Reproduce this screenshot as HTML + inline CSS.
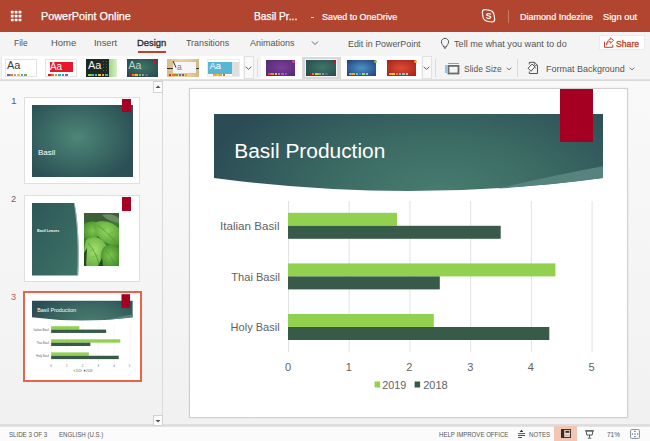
<!DOCTYPE html>
<html><head><meta charset="utf-8">
<style>
*{margin:0;padding:0;box-sizing:border-box}
html,body{width:650px;height:441px;overflow:hidden}
body{position:relative;background:#f3f3f3;font-family:"Liberation Sans",sans-serif;color:#444}
.a{position:absolute;white-space:nowrap;line-height:1}
#top{position:absolute;left:0;top:0;width:650px;height:32px;background:#b24530}
.w{color:#fff}
.dot{position:absolute;width:2.8px;height:2.8px;background:#fff;border-radius:0.3px}
#tabs{position:absolute;left:0;top:32px;width:650px;height:49px;background:#f4f4f4}
.tab{font-size:10.5px;color:#555}
.gbox{position:absolute;top:56px;height:24px;background:#fff;border:1px solid #e6e6e6}
.th{position:absolute;top:59px;width:31px;height:18px}
.dd{position:absolute;top:56px;height:24px;width:10px;background:#fafafa;border:1px solid #e0e0e0}
.sep{position:absolute;width:1px;background:#dcdcdc}
#hline{position:absolute;left:0;top:79px;width:650px;height:2px;background:linear-gradient(#e6e6e6,#d6d6d6)}
#panel{position:absolute;left:0;top:81px;width:163px;height:344px;background:linear-gradient(#f9f9f9,#f1f1f1)}
#pborder{position:absolute;left:162px;top:81px;width:1px;height:344px;background:#dadada}
#canvas{position:absolute;left:163px;top:81px;width:487px;height:344px;background:linear-gradient(#f9f9f9,#f1f1f1)}
#status{position:absolute;left:0;top:424px;width:650px;height:17px;background:linear-gradient(#e4e4e4,#d9d9d9 1px,#e4e4e4 2.5px,#fbfbfb 3px,#fbfbfb)}
.st{font-size:7.5px;color:#555}
.thumb{position:absolute;left:24px;width:116px;height:87px;background:#fff;border:1px solid #dfdfdf}
.num{font-size:10px;color:#666}
.slide{position:absolute;background:#fff}
.tag{position:absolute;background:#a90025}
.banner{position:absolute}
.lbl{font-size:11px;color:#595959}
</style></head>
<body>
<!-- title bar -->
<div id="top">
  <svg class="a" style="left:0;top:0" width="32" height="32" viewBox="0 0 32 32"><g fill="#fff"><rect x="10.85" y="10.85" width="2.7" height="2.7" rx="0.5"/><rect x="14.75" y="10.85" width="2.7" height="2.7" rx="0.5"/><rect x="18.65" y="10.85" width="2.7" height="2.7" rx="0.5"/><rect x="10.85" y="14.75" width="2.7" height="2.7" rx="0.5"/><rect x="14.75" y="14.75" width="2.7" height="2.7" rx="0.5"/><rect x="18.65" y="14.75" width="2.7" height="2.7" rx="0.5"/><rect x="10.85" y="18.65" width="2.7" height="2.7" rx="0.5"/><rect x="14.75" y="18.65" width="2.7" height="2.7" rx="0.5"/><rect x="18.65" y="18.65" width="2.7" height="2.7" rx="0.5"/></g></svg>
  <div class="a" style="left:41.36px;top:11px;font-size:11.5px;color:#fff;font-weight:400;-webkit-text-stroke:0.25px #fff;transform:scaleX(0.944);transform-origin:0 0">PowerPoint Online</div>
  <div class="a" style="left:254.27px;top:11px;font-size:11px;color:#fff;font-weight:400;-webkit-text-stroke:0.25px #fff;transform:scaleX(0.931);transform-origin:0 0">Basil Pr...</div>
  <div style="position:absolute;left:311px;top:17px;width:3px;height:1px;background:#f0d0c8"></div>
  <div class="a" style="left:322.17px;top:12px;font-size:9.6px;color:#fff;font-weight:400;-webkit-text-stroke:0.2px #fff;transform:scaleX(0.927);transform-origin:0 0">Saved to OneDrive</div>
  <svg class="a" style="left:481px;top:8px" width="16" height="16" viewBox="0 0 16 16"><path d="M4 1.6 C5 1.6 5.8 2.1 7.5 2.1 C10.8 2.1 13.2 4.6 13.2 7.8 C13.2 9.5 13.7 10.2 13.7 11.3 C13.7 12.8 12.5 14 11 14 C9.9 14 9.3 13.5 7.5 13.5 C4.3 13.5 1.8 11 1.8 7.8 C1.8 6.2 1.3 5.4 1.3 4.3 C1.3 2.8 2.5 1.6 4 1.6 Z" fill="none" stroke="#fff" stroke-width="1.1"/><text x="7.6" y="10.9" font-size="8.5" font-weight="bold" fill="#fff" text-anchor="middle" font-family="Liberation Sans">S</text></svg>
  <div class="sep" style="left:508px;top:10px;height:13px;background:#c87a68"></div>
  <div class="a" style="left:520.46px;top:12px;font-size:9.6px;color:#fff;font-weight:400;-webkit-text-stroke:0.2px #fff;transform:scaleX(0.942);transform-origin:0 0">Diamond Indezine</div>
  <div class="a" style="left:603.03px;top:12px;font-size:9.6px;color:#fff;font-weight:400;-webkit-text-stroke:0.2px #fff;transform:scaleX(0.971);transform-origin:0 0">Sign out</div>
</div>
<!-- ribbon -->
<div id="tabs"></div>
<div class="a" style="left:13.61px;top:38px;font-size:9.5px;color:#555;font-weight:400;transform:scaleX(0.893);transform-origin:0 0">File</div>
<div class="a" style="left:51.00px;top:38px;font-size:9.5px;color:#555;font-weight:400;transform:scaleX(0.996);transform-origin:0 0">Home</div>
<div class="a" style="left:94.43px;top:38px;font-size:9.5px;color:#555;font-weight:400;transform:scaleX(0.974);transform-origin:0 0">Insert</div>
<div class="a" style="left:137.21px;top:38px;font-size:9.5px;color:#2a2a2a;font-weight:400;-webkit-text-stroke:0.3px #2a2a2a;transform:scaleX(0.993);transform-origin:0 0">Design</div>
<div style="position:absolute;left:138px;top:51px;width:28px;height:2px;background:#b5472f"></div>
<div class="a" style="left:186.00px;top:38px;font-size:9.5px;color:#555;font-weight:400;transform:scaleX(0.935);transform-origin:0 0">Transitions</div>
<div class="a" style="left:250.00px;top:38px;font-size:9.5px;color:#555;font-weight:400;transform:scaleX(0.947);transform-origin:0 0">Animations</div>
<svg class="a" style="left:311px;top:40px" width="8" height="6" viewBox="0 0 8 6"><path d="M1 1.5 L4 4.5 L7 1.5" fill="none" stroke="#666" stroke-width="1"/></svg>
<div class="a" style="left:347.96px;top:39px;font-size:9.5px;color:#555;font-weight:400;transform:scaleX(0.935);transform-origin:0 0">Edit in PowerPoint</div>
<svg class="a" style="left:440px;top:37px" width="10" height="13" viewBox="0 0 10 13"><path d="M3.7 10 C3.5 8.3 1.4 7.3 1.4 4.9 C1.4 2.8 3 1.4 5 1.4 C7 1.4 8.6 2.8 8.6 4.9 C8.6 7.3 6.5 8.3 6.3 10 Z" fill="none" stroke="#555" stroke-width="1"/><path d="M3.8 10.4 H6.2 L5.6 11.8 H4.4 Z" fill="#555"/></svg>
<div class="a" style="left:453.50px;top:39px;font-size:9.5px;color:#555;font-weight:400;transform:scaleX(0.962);transform-origin:0 0">Tell me what you want to do</div>
<div style="position:absolute;left:599px;top:35px;width:45.5px;height:14.5px;background:#fff;border:1px solid #ececec"></div>
<svg class="a" style="left:603px;top:37px" width="12" height="11" viewBox="0 0 12 11"><path d="M1.5 4.8 V10.3 H9.8 V7.6" fill="none" stroke="#c0432a" stroke-width="1"/><path d="M3.6 8.2 C3.6 5.6 5.2 4.5 7.3 4.5 V6.2 L10.6 3.3 L7.3 0.9 V2.5 C5 2.6 3.6 4.8 3.6 8.2 Z" fill="none" stroke="#c0432a" stroke-width="0.9" stroke-linejoin="round"/></svg>
<div class="a" style="left:616.09px;top:39px;font-size:9.5px;color:#c0432a;font-weight:400;-webkit-text-stroke:0.35px #c0432a;transform:scaleX(0.912);transform-origin:0 0">Share</div>

<div style="position:absolute;left:1px;top:56px;width:242px;height:23px;background:#fff;border-left:1px solid #e8e8e8"></div><div style="position:absolute;left:5px;top:59px;width:32px;height:18px;background:#fff;border:1px solid #e3e3e3"></div><div class="a" style="left:6.5px;top:59.5px;font-size:11.5px;color:#3a3a3a;transform:scaleX(0.95);transform-origin:0 0">Aa</div><div style="position:absolute;left:7.0px;top:73.7px;width:2.6px;height:2px;background:#4472c4"></div><div style="position:absolute;left:10.4px;top:73.7px;width:2.6px;height:2px;background:#ed7d31"></div><div style="position:absolute;left:13.8px;top:73.7px;width:2.6px;height:2px;background:#a5a5a5"></div><div style="position:absolute;left:17.2px;top:73.7px;width:2.6px;height:2px;background:#ffc000"></div><div style="position:absolute;left:20.6px;top:73.7px;width:2.6px;height:2px;background:#5b9bd5"></div><div style="position:absolute;left:24.0px;top:73.7px;width:2.6px;height:2px;background:#70ad47"></div><div style="position:absolute;left:45px;top:59px;width:32px;height:18px;background:#fff;border:1px solid #e3e3e3"></div><div style="position:absolute;left:49.6px;top:62px;width:23px;height:10px;background:#e9172b"></div><div class="a" style="left:49.5px;top:60.5px;font-size:11px;color:#fff;transform:scaleX(0.9);transform-origin:0 0">Aa</div><div style="position:absolute;left:48.0px;top:73.7px;width:2.6px;height:2px;background:#e81123"></div><div style="position:absolute;left:51.4px;top:73.7px;width:2.6px;height:2px;background:#f7630c"></div><div style="position:absolute;left:54.8px;top:73.7px;width:2.6px;height:2px;background:#8cbd3f"></div><div style="position:absolute;left:58.2px;top:73.7px;width:2.6px;height:2px;background:#2bb39a"></div><div style="position:absolute;left:61.6px;top:73.7px;width:2.6px;height:2px;background:#3b8fd0"></div><div style="position:absolute;left:65.0px;top:73.7px;width:2.6px;height:2px;background:#a349c8"></div><div style="position:absolute;left:86px;top:59px;width:31px;height:18px;background:linear-gradient(90deg,#1f2923 0 74%,#9fd483 74%,#d9f0c8)"></div><div style="position:absolute;left:102px;top:60px;width:6px;height:12px;background:radial-gradient(circle,#4a584c 0.5px,transparent 0.6px) 0 0/3px 3px"></div><div class="a" style="left:87.5px;top:59.5px;font-size:11.5px;color:#f4f4f4;transform:scaleX(0.95);transform-origin:0 0">Aa</div><div style="position:absolute;left:88.0px;top:73.8px;width:2.6px;height:2px;background:#8fd14f"></div><div style="position:absolute;left:91.4px;top:73.8px;width:2.6px;height:2px;background:#4fb3d9"></div><div style="position:absolute;left:94.8px;top:73.8px;width:2.6px;height:2px;background:#4fb3d9"></div><div style="position:absolute;left:98.2px;top:73.8px;width:2.6px;height:2px;background:#f2c12e"></div><div style="position:absolute;left:101.6px;top:73.8px;width:2.6px;height:2px;background:#f2a52e"></div><div style="position:absolute;left:105.0px;top:73.8px;width:2.6px;height:2px;background:#5ba3c9"></div><div style="position:absolute;left:127px;top:59.4px;width:31px;height:17.2px;background:radial-gradient(ellipse at 50% 45%,#3f7568,#24484a)"></div><div style="position:absolute;left:153.5px;top:60px;width:2.5px;height:2.5px;background:#c8102e"></div><div class="a" style="left:128.5px;top:60.3px;font-size:10.5px;color:#bfd6d0;transform:scaleX(1);transform-origin:0 0">Aa</div><div style="position:absolute;left:129.0px;top:73.8px;width:2.5px;height:2px;background:#c8102e"></div><div style="position:absolute;left:132.2px;top:73.8px;width:2.5px;height:2px;background:#e87b22"></div><div style="position:absolute;left:135.4px;top:73.8px;width:2.5px;height:2px;background:#f0c419"></div><div style="position:absolute;left:138.6px;top:73.8px;width:2.5px;height:2px;background:#95b26d"></div><div style="position:absolute;left:141.8px;top:73.8px;width:2.5px;height:2px;background:#8e9aa0"></div><div style="position:absolute;left:145.0px;top:73.8px;width:2.5px;height:2px;background:#8a4db0"></div><div style="position:absolute;left:167px;top:59.4px;width:31.6px;height:17.2px;background:linear-gradient(90deg,#d8bb86,#ead3a6 40%,#e6cc9c 70%,#d5b783)"></div><div style="position:absolute;left:167px;top:67.5px;width:31.6px;height:1.6px;background:#2f2a26"></div><div style="position:absolute;left:172.5px;top:62px;width:23.5px;height:10.5px;background:#f6f6f6;box-shadow:0 0 1px #aaa"></div><div class="a" style="left:177px;top:63.2px;font-size:8.5px;color:#777;">a</div><div style="position:absolute;left:173.5px;top:61.2px;width:0.9px;height:6.5px;background:#333;transform:rotate(-25deg)"></div><div style="position:absolute;left:169.0px;top:73.8px;width:2.4px;height:2px;background:#b23b2e"></div><div style="position:absolute;left:172.2px;top:73.8px;width:2.4px;height:2px;background:#e07a1f"></div><div style="position:absolute;left:175.4px;top:73.8px;width:2.4px;height:2px;background:#7aa33b"></div><div style="position:absolute;left:178.6px;top:73.8px;width:2.4px;height:2px;background:#2e86b5"></div><div style="position:absolute;left:181.8px;top:73.8px;width:2.4px;height:2px;background:#c43b3b"></div><div style="position:absolute;left:185.0px;top:73.8px;width:2.4px;height:2px;background:#e0a030"></div><div style="position:absolute;left:207px;top:59.4px;width:32.5px;height:17.2px;background:#fff;border:1px solid #ececec"></div><div style="position:absolute;left:208px;top:61.5px;width:23.6px;height:12.3px;background:#57b6d3"></div><div style="position:absolute;left:231.6px;top:61.5px;width:7px;height:14px;background:#dedede"></div><div class="a" style="left:209.5px;top:61.2px;font-size:9.5px;color:#fff;transform:scaleX(1);transform-origin:0 0">Aa</div><div style="position:absolute;left:213.0px;top:73.8px;width:2.6px;height:2px;background:#f5a623"></div><div style="position:absolute;left:216.2px;top:73.8px;width:2.6px;height:2px;background:#f0c419"></div><div style="position:absolute;left:219.4px;top:73.8px;width:2.6px;height:2px;background:#f0a030"></div><div style="position:absolute;left:222.6px;top:73.8px;width:2.6px;height:2px;background:#e8583e"></div><div style="position:absolute;left:244px;top:56px;width:10px;height:23px;background:#f9f9f9;border:1px solid #e2e2e2"></div><svg class="a" style="left:245px;top:66px" width="7" height="5" viewBox="0 0 7 5"><path d="M0.6 0.8 L3.5 3.3 L6.4 0.8" fill="none" stroke="#555" stroke-width="0.9"/></svg><div style="position:absolute;left:257px;top:59px;width:1px;height:18px;background:#dcdcdc"></div><div style="position:absolute;left:261px;top:56px;width:160px;height:23px;background:#fff"></div><div style="position:absolute;left:266px;top:59.8px;width:28.6px;height:16.2px;background:radial-gradient(ellipse at 55% 45%,#7d3d99,#4d2870)"></div><div style="position:absolute;left:292px;top:59.5px;width:3px;height:3px;background:#e5457a;border-radius:50%"></div><div style="position:absolute;left:268.0px;top:73.3px;width:2.6px;height:2.2px;background:#e8473c"></div><div style="position:absolute;left:271.3px;top:73.3px;width:2.6px;height:2.2px;background:#f08c2e"></div><div style="position:absolute;left:274.6px;top:73.3px;width:2.6px;height:2.2px;background:#f6c330"></div><div style="position:absolute;left:277.9px;top:73.3px;width:2.6px;height:2.2px;background:#e06cc0"></div><div style="position:absolute;left:281.2px;top:73.3px;width:2.6px;height:2.2px;background:#b05ad0"></div><div style="position:absolute;left:284.5px;top:73.3px;width:2.6px;height:2.2px;background:#9a4ccf"></div><div style="position:absolute;left:301.7px;top:57px;width:39px;height:22px;background:#d8d8d8"></div><div style="position:absolute;left:305px;top:59px;width:32px;height:18px;background:#f4f4f4"></div><div style="position:absolute;left:306px;top:60px;width:30px;height:16px;background:radial-gradient(ellipse at 55% 45%,#3f7668,#24474a)"></div><div style="position:absolute;left:333px;top:59.5px;width:3px;height:3px;background:#c8102e;border-radius:50%"></div><div style="position:absolute;left:308.5px;top:73.3px;width:2.6px;height:2.2px;background:#c8102e"></div><div style="position:absolute;left:311.8px;top:73.3px;width:2.6px;height:2.2px;background:#e87b22"></div><div style="position:absolute;left:315.1px;top:73.3px;width:2.6px;height:2.2px;background:#f0c419"></div><div style="position:absolute;left:318.4px;top:73.3px;width:2.6px;height:2.2px;background:#95b26d"></div><div style="position:absolute;left:321.7px;top:73.3px;width:2.6px;height:2.2px;background:#8e9aa0"></div><div style="position:absolute;left:325.0px;top:73.3px;width:2.6px;height:2.2px;background:#8a4db0"></div><div style="position:absolute;left:347px;top:60px;width:29px;height:16px;background:radial-gradient(ellipse at 50% 50%,#4b93c6,#1f3f7c)"></div><div style="position:absolute;left:373.5px;top:59.5px;width:3px;height:3px;background:#8cc63f;border-radius:50%"></div><div style="position:absolute;left:349.0px;top:73.3px;width:2.6px;height:2.2px;background:#8cc63f"></div><div style="position:absolute;left:352.3px;top:73.3px;width:2.6px;height:2.2px;background:#f3a533"></div><div style="position:absolute;left:355.6px;top:73.3px;width:2.6px;height:2.2px;background:#5ec2e8"></div><div style="position:absolute;left:358.9px;top:73.3px;width:2.6px;height:2.2px;background:#2ba39b"></div><div style="position:absolute;left:362.2px;top:73.3px;width:2.6px;height:2.2px;background:#b0d36b"></div><div style="position:absolute;left:365.5px;top:73.3px;width:2.6px;height:2.2px;background:#7fd3e6"></div><div style="position:absolute;left:387px;top:60px;width:29px;height:16px;background:radial-gradient(ellipse at 50% 50%,#dc4d35,#a51f18)"></div><div style="position:absolute;left:413.5px;top:59.5px;width:3px;height:3px;background:#f5a623;border-radius:50%"></div><div style="position:absolute;left:389.0px;top:73.3px;width:2.6px;height:2.2px;background:#f5a623"></div><div style="position:absolute;left:392.3px;top:73.3px;width:2.6px;height:2.2px;background:#f6d23a"></div><div style="position:absolute;left:395.6px;top:73.3px;width:2.6px;height:2.2px;background:#e8785a"></div><div style="position:absolute;left:398.9px;top:73.3px;width:2.6px;height:2.2px;background:#63c2e6"></div><div style="position:absolute;left:402.2px;top:73.3px;width:2.6px;height:2.2px;background:#8bd18a"></div><div style="position:absolute;left:405.5px;top:73.3px;width:2.6px;height:2.2px;background:#c9c9c9"></div><div style="position:absolute;left:422px;top:56px;width:10px;height:23px;background:#f9f9f9;border:1px solid #e2e2e2"></div><svg class="a" style="left:423px;top:66px" width="7" height="5" viewBox="0 0 7 5"><path d="M0.6 0.8 L3.5 3.3 L6.4 0.8" fill="none" stroke="#555" stroke-width="0.9"/></svg><div style="position:absolute;left:435px;top:59px;width:1px;height:18px;background:#dcdcdc"></div><svg class="a" style="left:445px;top:62px" width="15" height="13" viewBox="0 0 15 13"><path d="M3 1.5 H14" stroke="#59b4e6" stroke-width="1"/><path d="M1 3 V11" stroke="#3a8fd8" stroke-width="1"/><rect x="3.5" y="3.9" width="10" height="7.6" fill="none" stroke="#6b6b6b" stroke-width="1.8"/></svg><div class="a" style="left:464.01px;top:64px;font-size:9.5px;color:#555;font-weight:400;transform:scaleX(0.893);transform-origin:0 0">Slide Size</div><svg class="a" style="left:506px;top:66.5px" width="6" height="5" viewBox="0 0 6 5"><path d="M0.6 0.8 L3.0 2.8 L5.4 0.8" fill="none" stroke="#666" stroke-width="0.9"/></svg><div style="position:absolute;left:517px;top:59px;width:1px;height:18px;background:#dcdcdc"></div><svg class="a" style="left:527px;top:61px" width="13" height="14" viewBox="0 0 13 14"><path d="M2.3 3.4 V1.3 H7.6 L10.5 4.4 V12.5 H2.3 V10.6" fill="none" stroke="#505050" stroke-width="1"/><path d="M7.4 1.5 V4.4 H10.3" fill="none" stroke="#505050" stroke-width="0.7"/><path d="M1.1 7.2 L5 3.1 L7.8 5.8 L4.1 10.3 Z" fill="#fafafa" stroke="#505050" stroke-width="1"/><path d="M8.4 5.6 L8.9 8.2" stroke="#6cc0e8" stroke-width="1"/></svg><div class="a" style="left:545.85px;top:64px;font-size:9.5px;color:#555;font-weight:400;transform:scaleX(0.945);transform-origin:0 0">Format Background</div><svg class="a" style="left:628.5px;top:66.5px" width="6" height="5" viewBox="0 0 6 5"><path d="M0.6 0.8 L3.0 2.8 L5.4 0.8" fill="none" stroke="#666" stroke-width="0.9"/></svg>
<div id="hline"></div>
<!-- panel -->
<div id="panel"></div>
<div id="canvas"></div>
<div id="pborder"></div>
<div style="position:absolute;left:153px;top:81px;width:10px;height:11.5px;background:#fdfdfd;border:1px solid #d2d2d2"></div>
<svg class="a" style="left:155px;top:84.3px" width="6" height="6" viewBox="0 0 6 6"><path d="M0.5 4 L3 1.5 L5.5 4 Z" fill="#505050"/></svg>


<div class="a" style="left:10.62px;top:96px;font-size:9.5px;color:#666;font-weight:400;transform:scaleX(1.075);transform-origin:0 0">1</div>
<div class="thumb" style="top:97px">
  <div style="position:absolute;left:7px;top:7px;width:101px;height:72px;background:radial-gradient(ellipse 60% 65% at 45% 45%,#4d8677,#2b5055)"></div>
  <div class="a" style="left:13px;top:51px;font-size:8px;color:#fff">Basil</div>
  <div class="tag" style="left:97px;top:1px;width:9px;height:13px"></div>
</div>
<div class="a" style="left:11.30px;top:194px;font-size:9.5px;color:#666;font-weight:400;transform:scaleX(0.980);transform-origin:0 0">2</div>
<div class="thumb" style="top:195px">
  <svg style="position:absolute;left:7px;top:7px" width="49" height="73" viewBox="0 0 49 73"><defs><linearGradient id="g2" x1="0" y1="0" x2="1" y2="1"><stop offset="0" stop-color="#2e5758"/><stop offset="1" stop-color="#3e7367"/></linearGradient></defs><path d="M0 0 H42.5 C46 18 47.5 45 46.2 72.5 H0 Z" fill="url(#g2)"/><path d="M42.3 0.3 C45.6 18 47 45 45.7 72.3" fill="none" stroke="#a9c4be" stroke-width="0.9"/></svg>
  <div class="a" style="left:12.4px;top:32.6px;font-size:4px;color:#f2f6f5;font-weight:bold;transform:scaleX(0.92);transform-origin:0 0">Basil Leaves</div>
  <svg style="position:absolute;left:59px;top:17px" width="35" height="53" viewBox="0 0 35 53">
<defs><radialGradient id="lf1" cx="0.45" cy="0.45" r="0.7"><stop offset="0" stop-color="#a4df6e"/><stop offset="1" stop-color="#5da93a"/></radialGradient>
<radialGradient id="lf2" cx="0.5" cy="0.4" r="0.7"><stop offset="0" stop-color="#92d65e"/><stop offset="1" stop-color="#4f9a30"/></radialGradient>
<radialGradient id="lf3" cx="0.5" cy="0.5" r="0.7"><stop offset="0" stop-color="#7fc64e"/><stop offset="1" stop-color="#3f8429"/></radialGradient></defs>
<rect width="35" height="53" fill="#3e7a2d"/>
<path d="M0 0 H35 V8 C28 10 20 6 12 9 C6 11 3 8 0 9 Z" fill="#3b5f37"/>
<path d="M18 2 C24 0 33 2 35 6 V10 C30 9 24 8 18 2 Z" fill="#6a8a64"/>
<path d="M0 12 C6 6 14 8 17 14 C19 20 13 26 6 27 C3 27 1 25 0 24 Z" fill="url(#lf3)"/>
<path d="M10 10 C18 6 30 9 35 16 V32 C28 34 20 30 15 24 C11 19 9 14 10 10 Z" fill="url(#lf2)"/>
<path d="M2 27 C8 22 18 24 22 32 C26 40 22 50 14 53 H3 C0 47 -1 38 2 27 Z" fill="url(#lf1)"/>
<path d="M20 34 C26 30 35 32 35 36 V53 H18 C16 46 16 38 20 34 Z" fill="url(#lf3)"/>
<path d="M0 40 L3 35 L2 53 H0 Z M14 53 L18 45 L19 53 Z" fill="#25441f"/>
<path d="M4 30 C9 36 13 42 15 52 M13 12 C19 16 26 22 33 30 M22 38 C26 42 29 47 31 53" stroke="#4c9433" stroke-width="0.7" fill="none"/>
<path d="M6 38 L11 36 M8 44 L14 42 M18 17 L22 14 M24 22 L29 19" stroke="#5ca83c" stroke-width="0.5" fill="none"/>
</svg>
  <div class="tag" style="left:97px;top:1px;width:9px;height:14px"></div>
</div>
<div class="a" style="left:11.10px;top:292px;font-size:9.5px;color:#c95a44;font-weight:400;transform:scaleX(0.980);transform-origin:0 0">3</div>
<div style="position:absolute;left:23px;top:291px;width:119px;height:91px;border:2px solid #e6654a;background:#fff"></div>
<svg style="position:absolute;left:25px;top:293px" width="115" height="87" viewBox="0 0 115 87"><g transform="translate(0.8 1.2) scale(0.2586) translate(-190 -89)"><use href="#sc"/></g></svg>

<!-- main slide -->
<div class="slide" id="main" style="left:189px;top:88px;width:439px;height:330px;border:1px solid #d0d0d0;box-shadow:0 0 1px rgba(0,0,0,0.18)"></div>
<svg style="position:absolute;left:190px;top:89px" width="437" height="329" viewBox="190 89 437 329">
<defs>
<radialGradient id="bg1" gradientUnits="userSpaceOnUse" cx="439.6" cy="194.9" r="241" gradientTransform="translate(439.6 194.9) scale(1 0.5145) translate(-439.6 -194.9)"><stop offset="0" stop-color="#487d6f"/><stop offset="0.45" stop-color="#3c6b64"/><stop offset="1" stop-color="#2b4c55"/></radialGradient>
<g id="sc">
<path d="M214 114 H603 V178 Q408.5 204 214 178 Z" fill="url(#bg1)"/>
<path d="M498 188.6 Q540 178 603 166.2 V178 Q560 184 498 188.6 Z" fill="#57837f"/>
<rect x="560" y="89" width="33" height="53" fill="#a50021"/>
<text x="234.3" y="157.8" font-family="Liberation Sans" font-size="19.5" fill="#fff" textLength="151" lengthAdjust="spacingAndGlyphs">Basil Production</text>
<g stroke="#e2e2e2" stroke-width="1">
<path d="M288.5 201 V352 M349.2 201 V352 M409.9 201 V352 M470.7 201 V352 M531.4 201 V352 M592.1 201 V352"/>
</g>
<g fill="#92d050">
<rect x="288" y="212.8" width="109" height="13"/>
<rect x="288" y="263.4" width="267.4" height="13"/>
<rect x="288" y="314" width="145.8" height="13"/>
</g>
<g fill="#375b48">
<rect x="288" y="225.8" width="212.7" height="13"/>
<rect x="288" y="276.4" width="151.8" height="13"/>
<rect x="288" y="327" width="261.3" height="13"/>
</g>
<g font-family="Liberation Sans" font-size="11" fill="#626262" text-anchor="end">
<text x="279.5" y="230" textLength="59.5" lengthAdjust="spacingAndGlyphs">Italian Basil</text>
<text x="280" y="280.5" textLength="48.7" lengthAdjust="spacingAndGlyphs">Thai Basil</text>
<text x="279.6" y="331" textLength="49" lengthAdjust="spacingAndGlyphs">Holy Basil</text>
</g>
<g font-family="Liberation Sans" font-size="11" fill="#626262" text-anchor="middle">
<text x="288" y="370.8">0</text><text x="348.7" y="370.8">1</text><text x="409.4" y="370.8">2</text><text x="470.2" y="370.8">3</text><text x="530.9" y="370.8">4</text><text x="591.6" y="370.8">5</text>
</g>
<rect x="374.6" y="381.5" width="5.5" height="6" fill="#92d050"/>
<rect x="414.6" y="381.5" width="5.5" height="6" fill="#375b48"/>
<g font-family="Liberation Sans" font-size="11" fill="#626262">
<text x="382.3" y="388.6" textLength="24" lengthAdjust="spacingAndGlyphs">2019</text><text x="423.2" y="388.6" textLength="24.5" lengthAdjust="spacingAndGlyphs">2018</text>
</g>
</g>
</defs>
<use href="#sc"/>
</svg>

<!-- status -->
<div id="status"></div>
<div style="position:absolute;left:153px;top:415px;width:10px;height:11px;background:#fdfdfd;border:1px solid #d2d2d2"></div>
<svg class="a" style="left:155px;top:418px" width="6" height="6" viewBox="0 0 6 6"><path d="M0.5 2 L3 4.5 L5.5 2 Z" fill="#505050"/></svg>
<div class="a" style="left:9.00px;top:431px;font-size:8px;color:#555;font-weight:400;transform:scaleX(0.766);transform-origin:0 0">SLIDE 3 OF 3</div>
<div class="a" style="left:59.10px;top:431px;font-size:8px;color:#555;font-weight:400;transform:scaleX(0.760);transform-origin:0 0">ENGLISH (U.S.)</div>
<div class="a" style="left:438.90px;top:431px;font-size:8px;color:#555;font-weight:400;transform:scaleX(0.759);transform-origin:0 0">HELP IMPROVE OFFICE</div>
<svg class="a" style="left:517px;top:429px" width="9" height="10" viewBox="0 0 9 10"><path d="M2.6 3 L4.5 0.8 L6.4 3 Z" fill="#333"/><path d="M1 4.6 H8.1 M1 6.5 H8.1 M1 8.5 H5" stroke="#444" stroke-width="0.9"/></svg>
<div class="a" style="left:529.00px;top:431px;font-size:8px;color:#555;font-weight:400;transform:scaleX(0.763);transform-origin:0 0">NOTES</div>
<div style="position:absolute;left:554px;top:426px;width:23px;height:15px;background:#f3c6b4"></div>
<svg class="a" style="left:561px;top:429px" width="10" height="9" viewBox="0 0 10 9"><rect x="0.5" y="0.5" width="9" height="8" fill="#f6d2c4" stroke="#3a3a3a" stroke-width="1"/><rect x="0" y="0" width="3.2" height="9" fill="#2e2e2e"/><rect x="4.5" y="1.8" width="3.8" height="2" fill="#333"/><path d="M4 6.5 H9" stroke="#c9a090" stroke-width="0.8"/></svg>
<svg class="a" style="left:585px;top:429.5px" width="9" height="9" viewBox="0 0 9 9"><path d="M0.3 0.9 H8.7" stroke="#333" stroke-width="1.3"/><path d="M1.2 1.3 L1.8 5 H7.2 L7.8 1.3" fill="none" stroke="#444" stroke-width="0.9"/><path d="M4.5 5 V7.6 M2.8 8.2 H6.2" stroke="#444" stroke-width="0.9"/></svg>
<div class="a" style="left:607.00px;top:431px;font-size:8px;color:#555;font-weight:400;transform:scaleX(0.812);transform-origin:0 0">71%</div>
<svg class="a" style="left:630px;top:429px" width="10" height="10" viewBox="0 0 10 10"><rect x="0.6" y="0.6" width="8.8" height="8.8" rx="0.8" fill="#fff" stroke="#8a8a8a" stroke-width="1"/><circle cx="5" cy="5" r="1" fill="#aaa"/><path d="M5 1.4 L3.9 2.9 H6.1 Z M5 8.6 L3.9 7.1 H6.1 Z M1.4 5 L2.9 3.9 V6.1 Z M8.6 5 L7.1 3.9 V6.1 Z" fill="#2f7fd6"/></svg>
</body></html>
